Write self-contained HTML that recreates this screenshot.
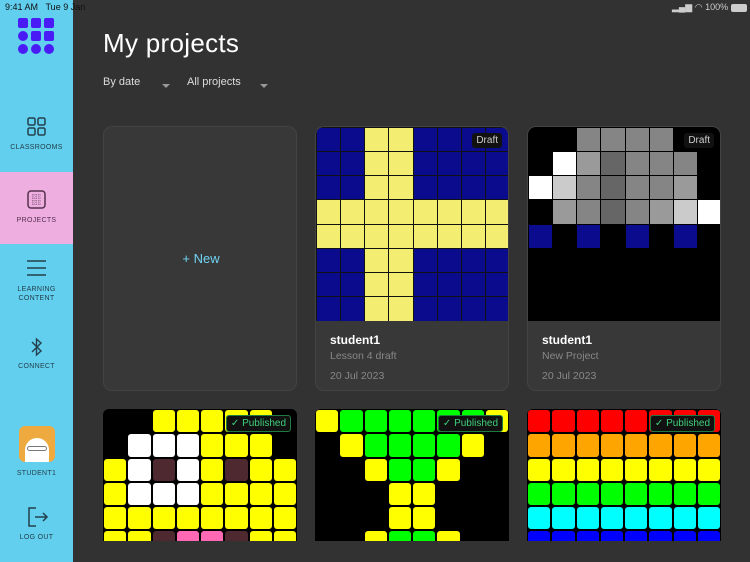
<!DOCTYPE html>
<html><head><meta charset="utf-8"><style>
*{margin:0;padding:0;box-sizing:border-box}
body{width:750px;height:562px;background:#323232;font-family:"Liberation Sans",sans-serif;position:relative;overflow:hidden}
.side{position:absolute;left:0;top:0;width:73px;height:562px;background:#62cfee}
.pink{position:absolute;left:0;top:172px;width:73px;height:72px;background:#eeaee0}
.lbl{position:absolute;left:0;width:73px;text-align:center;font-size:7px;color:#23404c;letter-spacing:.3px;line-height:9px}
.ic{position:absolute}
.status{position:absolute;top:2px;font-size:9px;color:#111}
h1{position:absolute;left:103px;top:28px;font-size:26px;font-weight:normal;color:#fff;letter-spacing:.3px}
.flt{position:absolute;top:76px;font-size:11px;color:#ddd}
.arr{position:absolute;top:84px;width:0;height:0;border-left:4px solid transparent;border-right:4px solid transparent;border-top:4px solid #999}
.card{position:absolute;width:194px;height:265px;background:#383838;border:1px solid #434343;border-radius:9px;overflow:hidden}
.img{position:absolute;left:0;top:0;width:194px;height:194px;display:grid;grid-template-columns:repeat(8,1fr);grid-template-rows:repeat(8,1fr);background:#111}
.img div{margin:.5px}
.b .img div{border-radius:3px;margin:1px}
.name{position:absolute;left:14px;top:206px;font-size:12px;color:#fff;font-weight:bold}
.sub{position:absolute;left:14px;top:223px;font-size:10.5px;color:#888}
.date{position:absolute;left:14px;top:243px;font-size:10.5px;color:#888}
.badge{position:absolute;right:6px;top:6px;background:#111;color:#ccc;font-size:10px;padding:2px 4px;border-radius:3px}
.pub{color:#3fd07a;border:1px solid #1f7a3f;font-size:10px}
</style></head><body>
<div class="side"></div><div class="pink"></div>
<div class="status" style="left:5px">9:41 AM&nbsp;&nbsp;&nbsp;Tue 9 Jan</div>
<div class="status" style="left:672px;color:#ccc">▂▄▆ ◠ 100% <span style="display:inline-block;width:16px;height:8px;border:1px solid #ccc;border-radius:2px;background:#ccc;vertical-align:middle"></span></div>
<svg class="ic" style="left:18px;top:18px" width="38" height="38" viewBox="0 0 38 38" fill="#4a1cf5">
<rect x="0" y="0" width="10" height="10" rx="2"/><rect x="13" y="0" width="10" height="10" rx="2"/><rect x="26" y="0" width="10" height="10" rx="2"/>
<circle cx="5" cy="18" r="5"/><rect x="13" y="13" width="10" height="10" rx="2"/><rect x="26" y="13" width="10" height="10" rx="2"/>
<circle cx="5" cy="31" r="5"/><circle cx="18" cy="31" r="5"/><circle cx="31" cy="31" r="5"/></svg>
<svg class="ic" style="left:27px;top:117px" width="20" height="20" fill="none" stroke="#23404c" stroke-width="1.5"><rect x="1" y="1" width="7" height="7" rx="1.5"/><rect x="11" y="1" width="7" height="7" rx="1.5"/><rect x="1" y="11" width="7" height="7" rx="1.5"/><rect x="11" y="11" width="7" height="7" rx="1.5"/></svg>
<div class="lbl" style="top:143px">CLASSROOMS</div>
<svg class="ic" style="left:27px;top:190px" width="20" height="20" fill="none" stroke="#55304e" stroke-width="1.5"><rect x="1" y="1" width="17" height="17" rx="3"/><path d="M5 5h10M5 8h10M5 11h10M5 14h10M6 4v11M9 4v11M12 4v11" stroke-width=".6" stroke-dasharray="1 1"/></svg>
<div class="lbl" style="top:216px;color:#55304e">PROJECTS</div>
<svg class="ic" style="left:26px;top:258px" width="21" height="20" stroke="#23404c" stroke-width="1.5"><path d="M1 3h19M1 10h19M1 17h19"/></svg>
<div class="lbl" style="top:285px">LEARNING<br>CONTENT</div>
<svg class="ic" style="left:30px;top:336px" width="14" height="22" fill="none" stroke="#23404c" stroke-width="1.4"><path d="M2 6l9 9-4.5 4V3L11 7 2 16"/></svg>
<div class="lbl" style="top:362px">CONNECT</div>
<div class="ic" style="left:19px;top:426px;width:36px;height:36px;background:#eea93f;border-radius:6px;overflow:hidden"><div style="position:absolute;left:6px;top:12px;width:24px;height:30px;background:#fff;border-radius:12px 12px 0 0"></div><div style="position:absolute;left:8px;top:20px;width:20px;height:5px;border:1px solid #777;border-radius:3px"></div></div>
<div class="lbl" style="top:469px">STUDENT1</div>
<svg class="ic" style="left:27px;top:507px" width="22" height="20" fill="none" stroke="#23404c" stroke-width="1.5"><path d="M9 1H2v18h7M8 10h12M16 6l4 4-4 4"/></svg>
<div class="lbl" style="top:533px">LOG OUT</div>

<h1>My projects</h1>
<div class="flt" style="left:103px">By date</div><div class="arr" style="left:162px"></div>
<div class="flt" style="left:187px">All projects</div><div class="arr" style="left:260px"></div>

<div class="card" style="left:103px;top:126px"><div style="position:absolute;left:0;top:124px;width:194px;text-align:center;color:#6fd3f5;font-size:13px">+ New</div></div>
<div class="card" style="left:315px;top:126px"><div class="img" id="g1"></div><div class="badge">Draft</div><div class="name">student1</div><div class="sub">Lesson 4 draft</div><div class="date">20 Jul 2023</div></div>
<div class="card" style="left:527px;top:126px"><div class="img" id="g2" style="background:#000"></div><div class="badge">Draft</div><div class="name">student1</div><div class="sub">New Project</div><div class="date">20 Jul 2023</div></div>
<div class="card b" style="left:103px;top:409px;height:132px;border:none;border-radius:6px 6px 0 0"><div class="img" id="g3" style="background:#000"></div><div class="badge pub">✓ Published</div></div>
<div class="card b" style="left:315px;top:409px;height:132px;border:none;border-radius:6px 6px 0 0"><div class="img" id="g4" style="background:#000"></div><div class="badge pub">✓ Published</div></div>
<div class="card b" style="left:527px;top:409px;height:132px;border:none;border-radius:6px 6px 0 0"><div class="img" id="g5" style="background:#000"></div><div class="badge pub">✓ Published</div></div>
<script>
function f(id,rows,m){var h='';rows.forEach(function(r){for(var i=0;i<8;i++)h+='<div style="background:'+m[r[i]]+'"></div>'});document.getElementById(id).innerHTML=h}
f('g1',['BBYYBBBB','BBYYBBBB','BBYYBBBB','YYYYYYYY','YYYYYYYY','BBYYBBBB','BBYYBBBB','BBYYBBBB'],{B:'#0b0b8e',Y:'#f3ee72'});
f('g2',['KKggggKK','KWhdgggK','WlgdgghK','KhgdghlW','BKBKBKBK','KKKKKKKK','KKKKKKKK','KKKKKKKK'],{K:'#000',W:'#fff',g:'#858585',h:'#9a9a9a',d:'#666',l:'#cbcbcb',B:'#0b0b8e'});
var c={K:'#000',Y:'#ffff00',W:'#fff',R:'#4e2a30',P:'#ff69b4',G:'#00ff00'};
f('g3',['KKYYYYYK','KWWWYYYK','YWRWYRYY','YWWWYYYY','YYYYYYYY','YYRPPRYY','YYYYYYYY','YYYYYYYY'],c);
f('g4',['YGGGGGGY','KYGGGGYK','KKYGGYKK','KKKYYKKK','KKKYYKKK','KKYGGYKK','KKKKKKKK','KKKKKKKK'],c);
f('g5',['RRRRRRRR','OOOOOOOO','YYYYYYYY','GGGGGGGG','CCCCCCCC','BBBBBBBB','KKKKKKKK','KKKKKKKK'],{R:'#ff0000',O:'#ffa500',Y:'#ffff00',G:'#00ff00',C:'#00ffff',B:'#0000ff',K:'#000'});
</script>
</body></html>
